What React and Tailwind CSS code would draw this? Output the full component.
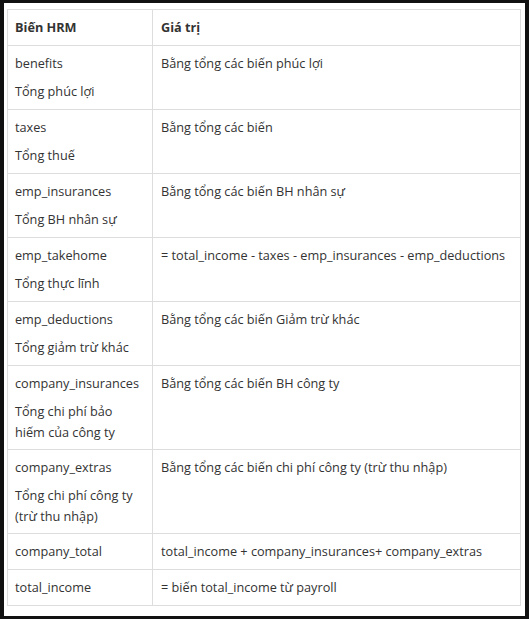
const ROWS = [
  { name: 'benefits', label: ['Tổng phúc lợi'], value: 'Bằng tổng các biến phúc lợi' },
  { name: 'taxes', label: ['Tổng thuế'], value: 'Bằng tổng các biến' },
  { name: 'emp_insurances', label: ['Tổng BH nhân sự'], value: 'Bằng tổng các biến BH nhân sự' },
  { name: 'emp_takehome', label: ['Tổng thực lĩnh'], value: '= total_income - taxes - emp_insurances - emp_deductions' },
  { name: 'emp_deductions', label: ['Tổng giảm trừ khác'], value: 'Bằng tổng các biến Giảm trừ khác' },
  { name: 'company_insurances', label: ['Tổng chi phí bảo', 'hiếm của công ty'], value: 'Bằng tổng các biến BH công ty' },
  { name: 'company_extras', label: ['Tổng chi phí công ty', '(trừ thu nhập)'], value: 'Bằng tổng các biến chi phí công ty (trừ thu nhập)' },
  { name: 'company_total', label: [], value: 'total_income + company_insurances+ company_extras' },
  { name: 'total_income', label: [], value: '= biến total_income từ payroll' },
]

export default function App() {
  return (
    <div className="h-[619px] w-[529px] bg-[#111111] pt-[3px] pb-[3px] px-[4px]">
      <div
        className="h-full bg-white pt-[6px] pl-[3px] pr-[4px] text-[12.7px] leading-[21px] text-[#333333]"
        style={{ fontFamily: '"Open Sans", "Noto Sans", sans-serif' }}
      >
        <table className="w-[514px] border-collapse table-fixed">
          <colgroup>
            <col className="w-[145px]" />
            <col />
          </colgroup>
          <thead>
            <tr>
              <th className="border border-[#dddddd] px-[7px] h-[36px] text-left font-bold">Biến HRM</th>
              <th className="border border-[#dddddd] px-[8px] h-[36px] text-left font-bold">Giá trị</th>
            </tr>
          </thead>
          <tbody>
            {ROWS.map((row) => (
              <tr key={row.name}>
                <td className="border border-[#dddddd] px-[7px] py-[7px] align-top">
                  <div className="flex flex-col gap-[7px]">
                    <div>{row.name}</div>
                    {row.label.length > 0 && (
                      <div className={row.label.length > 1 ? 'leading-[20.5px]' : ''}>
                        {row.label.map((l) => (
                          <div key={l}>{l}</div>
                        ))}
                      </div>
                    )}
                  </div>
                </td>
                <td className="border border-[#dddddd] px-[8px] py-[7px] align-top whitespace-nowrap">{row.value}</td>
              </tr>
            ))}
          </tbody>
        </table>
      </div>
    </div>
  )
}
